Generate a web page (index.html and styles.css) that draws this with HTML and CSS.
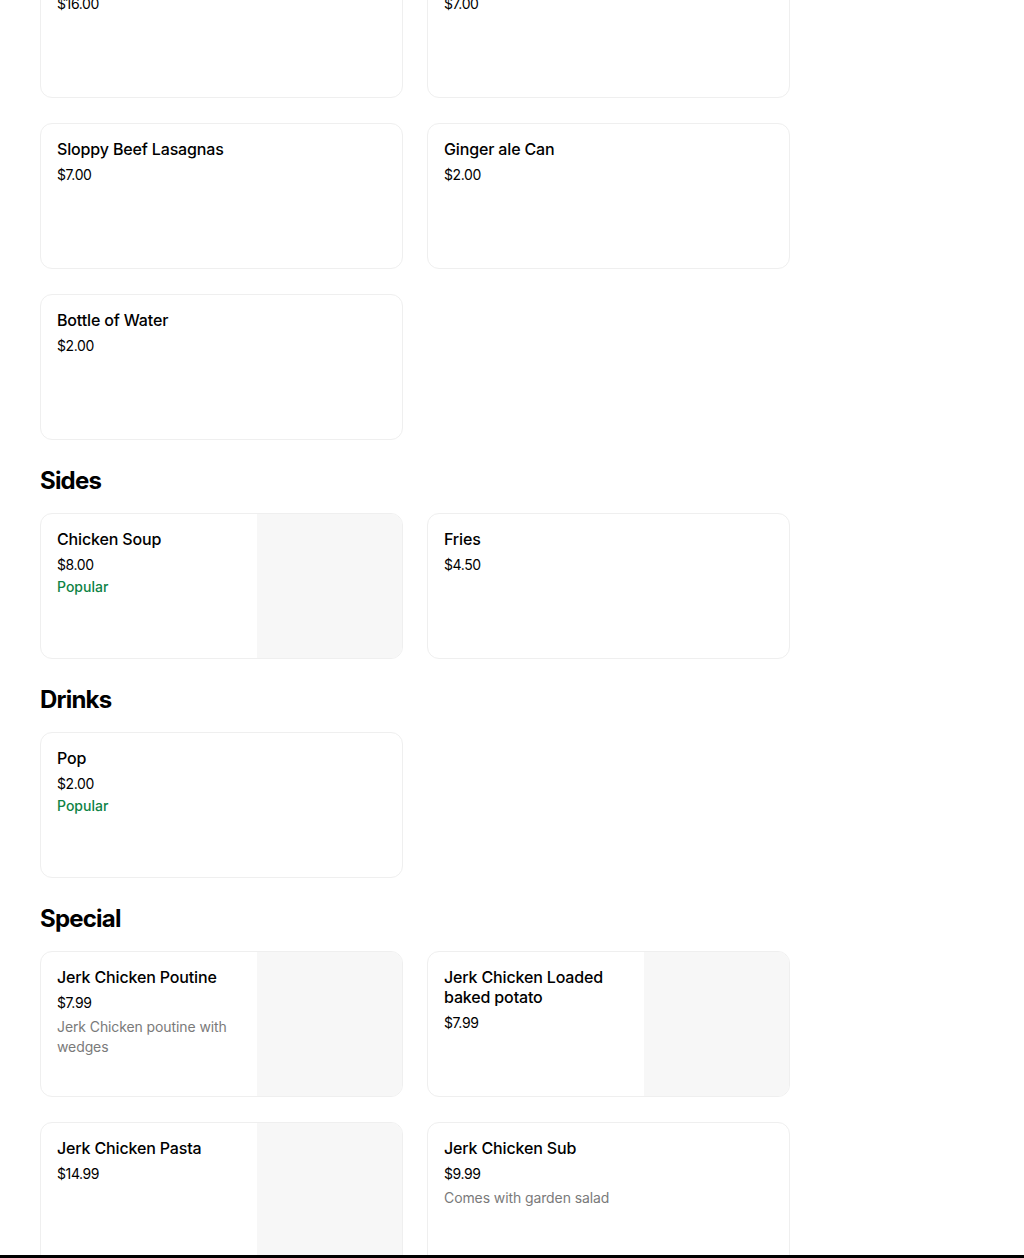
FILE: index.html
```html
<!DOCTYPE html>
<html lang="en">
<head>
<meta charset="utf-8">
<title>Menu</title>
<link rel="stylesheet" href="styles.css">
</head>
<body>
<main class="menu">
  <section class="section">
    <div class="grid">
      <div class="card"><div class="info"><div class="title">Jerk Chicken Dinner</div><div class="price">$16.00</div></div></div>
      <div class="card"><div class="info"><div class="title">Beef Patty</div><div class="price">$7.00</div></div></div>
      <div class="card"><div class="info"><div class="title">Sloppy Beef Lasagnas</div><div class="price">$7.00</div></div></div>
      <div class="card"><div class="info"><div class="title">Ginger ale Can</div><div class="price">$2.00</div></div></div>
      <div class="card"><div class="info"><div class="title">Bottle of Water</div><div class="price">$2.00</div></div></div>
    </div>
  </section>

  <section class="section">
    <h2 class="heading">Sides</h2>
    <div class="grid">
      <div class="card"><div class="info"><div class="title">Chicken Soup</div><div class="price">$8.00</div><div class="tag">Popular</div></div><div class="thumb"></div></div>
      <div class="card"><div class="info"><div class="title">Fries</div><div class="price">$4.50</div></div></div>
    </div>
  </section>

  <section class="section">
    <h2 class="heading">Drinks</h2>
    <div class="grid">
      <div class="card"><div class="info"><div class="title">Pop</div><div class="price">$2.00</div><div class="tag">Popular</div></div></div>
    </div>
  </section>

  <section class="section">
    <h2 class="heading">Special</h2>
    <div class="grid">
      <div class="card"><div class="info"><div class="title">Jerk Chicken Poutine</div><div class="price">$7.99</div><div class="desc">Jerk Chicken poutine with wedges</div></div><div class="thumb"></div></div>
      <div class="card"><div class="info"><div class="title">Jerk Chicken Loaded baked potato</div><div class="price">$7.99</div></div><div class="thumb"></div></div>
      <div class="card"><div class="info"><div class="title">Jerk Chicken Pasta</div><div class="price">$14.99</div></div><div class="thumb"></div></div>
      <div class="card"><div class="info"><div class="title">Jerk Chicken Sub</div><div class="price">$9.99</div><div class="desc">Comes with garden salad</div></div></div>
    </div>
  </section>
</main>
<div class="bottom-bar"></div>
</body>
</html>
```

FILE: styles.css
```css
html, body {
  margin: 0;
  padding: 0;
  background: #ffffff;
}

body {
  font-family: Inter, "Noto Sans", "Liberation Sans", sans-serif;
  color: #000000;
  overflow: hidden;
}

.menu {
  width: 750px;
  margin: -48px 0 0 40px;
}

.heading {
  margin: 0;
  padding: 25px 0 16px;
  font-size: 24px;
  line-height: 32px;
  font-weight: 700;
  letter-spacing: -0.8px;
  color: #000000;
}

.grid {
  display: grid;
  grid-template-columns: 363px 363px;
  column-gap: 24px;
  row-gap: 25px;
}

.card {
  box-sizing: border-box;
  height: 146px;
  border: 1px solid #efefef;
  border-radius: 12px;
  display: flex;
  overflow: hidden;
  background: #ffffff;
}

.info {
  flex: 1;
  min-width: 0;
  padding: 15px 16px 16px;
}

.title {
  font-size: 16px;
  line-height: 20px;
  font-weight: 500;
  letter-spacing: -0.15px;
  color: #000000;
}

.price {
  margin-top: 6px;
  font-size: 14px;
  line-height: 20px;
  font-weight: 400;
  letter-spacing: -0.4px;
  color: #000000;
}

.tag {
  margin-top: 2px;
  font-size: 14px;
  line-height: 20px;
  font-weight: 500;
  color: #0e8345;
}

.desc {
  margin-top: 4px;
  font-size: 14px;
  line-height: 20px;
  font-weight: 400;
  letter-spacing: -0.1px;
  color: #7a7a7a;
}

.thumb {
  flex: 0 0 145px;
  height: 100%;
  background: #f7f7f7;
}

.bottom-bar {
  position: fixed;
  left: 0;
  right: 0;
  bottom: 0;
  height: 3px;
  background: #000000;
}
```
